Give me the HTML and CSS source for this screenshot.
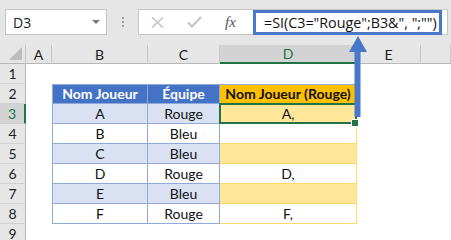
FILE: index.html
```html
<!DOCTYPE html>
<html lang="fr">
<head>
    <meta charset="UTF-8">
    <title>SI Rouge</title>
    <link rel="stylesheet" href="styles.css">
</head>
<body>
    <div class="toolbar">
        <div class="namebox">
            <span>D3</span>
            <svg class="caret" width="8" height="4" viewBox="0 0 8 4"><polygon points="0,0 8,0 4,4" fill="#7a7a7a"/></svg>
        </div>
        <div class="dots"><i></i><i></i><i></i></div>
        <div class="formula">
            <svg class="fbtn" width="13" height="11" viewBox="0 0 13 11"><path d="M1 0.5 L12 10.5 M12 0.5 L1 10.5" stroke="#c3c3c3" stroke-width="1.6" fill="none"/></svg>
            <svg class="fbtn" width="15" height="12" viewBox="0 0 15 12"><path d="M1 6.5 L5 10.5 L14 1" stroke="#c3c3c3" stroke-width="2" fill="none"/></svg>
            <span class="fx">fx</span>
            <div class="input">=SI(C3="Rouge";B3&amp;", ";"")</div>
        </div>
    </div>

    <div class="sheet">
        <div class="corner"><svg width="13" height="13" viewBox="0 0 13 13"><polygon points="13,0 13,13 0,13" fill="#bcbcbc"/></svg></div>
        <div class="colhead">A</div>
        <div class="colhead">B</div>
        <div class="colhead">C</div>
        <div class="colhead active">D</div>
        <div class="colhead">E</div>
        <div class="colhead"></div>

        <div class="rowhead">1</div>
        <div class="cell"></div><div class="cell"></div><div class="cell"></div><div class="cell"></div><div class="cell"></div><div class="cell"></div>

        <div class="rowhead">2</div>
        <div class="cell"></div>
        <div class="cell t blue-h first top">Nom Joueur</div>
        <div class="cell t blue-h top">Équipe</div>
        <div class="cell t gold-h top">Nom Joueur (Rouge)</div>
        <div class="cell"></div><div class="cell"></div>

        <div class="rowhead active">3</div>
        <div class="cell"></div>
        <div class="cell t blue first">A</div>
        <div class="cell t blue">Rouge</div>
        <div class="cell t gold selected">A,</div>
        <div class="cell"></div><div class="cell"></div>

        <div class="rowhead">4</div>
        <div class="cell"></div>
        <div class="cell t blue-w first">B</div>
        <div class="cell t blue-w">Bleu</div>
        <div class="cell t gold-w"></div>
        <div class="cell"></div><div class="cell"></div>

        <div class="rowhead">5</div>
        <div class="cell"></div>
        <div class="cell t blue first">C</div>
        <div class="cell t blue">Bleu</div>
        <div class="cell t gold"></div>
        <div class="cell"></div><div class="cell"></div>

        <div class="rowhead">6</div>
        <div class="cell"></div>
        <div class="cell t blue-w first">D</div>
        <div class="cell t blue-w">Rouge</div>
        <div class="cell t gold-w">D,</div>
        <div class="cell"></div><div class="cell"></div>

        <div class="rowhead">7</div>
        <div class="cell"></div>
        <div class="cell t blue first">E</div>
        <div class="cell t blue">Bleu</div>
        <div class="cell t gold"></div>
        <div class="cell"></div><div class="cell"></div>

        <div class="rowhead">8</div>
        <div class="cell"></div>
        <div class="cell t blue-w first">F</div>
        <div class="cell t blue-w">Rouge</div>
        <div class="cell t gold-w">F,</div>
        <div class="cell"></div><div class="cell"></div>

        <div class="rowhead">9</div>
        <div class="cell"></div><div class="cell"></div><div class="cell"></div><div class="cell"></div><div class="cell"></div><div class="cell"></div>
    </div>

    <svg class="arrow" width="20" height="82" viewBox="0 0 20 82">
        <polygon points="1,16 19,16 10,0" fill="#4a78c8"/>
        <rect x="6.5" y="15" width="6" height="66" fill="#4a78c8"/>
    </svg>
</body>
</html>
```

FILE: styles.css
```css
body {
    margin: 0;
    width: 451px;
    height: 240px;
    overflow: hidden;
    background: #fff;
    font-family: Lato, "Liberation Sans", sans-serif;
    position: relative;
}
.toolbar {
    height: 45px;
    background: #e6e6e6;
    display: flex;
    align-items: flex-start;
    padding-top: 9px;
    box-sizing: border-box;
}
.namebox {
    margin-left: 5px;
    width: 102px;
    height: 26px;
    box-sizing: border-box;
    background: #fff;
    border: 1px solid #c6c6c6;
    display: flex;
    align-items: center;
    justify-content: space-between;
    padding: 0 6px 0 7px;
    font-family: "Open Sans", sans-serif;
    font-size: 14px;
    color: #222;
}
.dots {
    width: 31px;
    height: 26px;
    display: flex;
    flex-direction: column;
    align-items: center;
    justify-content: center;
    gap: 2px;
}
.dots i {
    width: 2px;
    height: 2px;
    background: #a0a0a0;
}
.formula {
    width: 310px;
    height: 26px;
    box-sizing: border-box;
    background: #fff;
    border: 1px solid #c6c6c6;
    display: flex;
    align-items: center;
}
.fbtn {
    margin-left: 12px;
    margin-right: 11px;
}
.fx {
    margin-left: 12px;
    font-family: "Liberation Serif", serif;
    font-style: italic;
    font-size: 15px;
    color: #555;
    width: 14px;
}
.input {
    margin-left: 14px;
    width: 189px;
    height: 25px;
    box-sizing: border-box;
    border: 3px solid #4a78c8;
    padding-left: 8px;
    font-family: "Open Sans", sans-serif;
    font-size: 14.3px;
    line-height: 19px;
    color: #111;
    white-space: nowrap;
}
.sheet {
    display: grid;
    grid-template-columns: 26px 26px 96px 72px 137px 64px 1fr;
    grid-template-rows: 19px repeat(9, 20px);
    font-size: 14px;
}
.corner, .colhead {
    background: #e6e6e6;
    border-right: 1px solid #c8c8c8;
    border-bottom: 1px solid #b8b8b8;
    box-sizing: border-box;
    display: flex;
    align-items: center;
    justify-content: center;
    color: #222;
}
.corner {
    align-items: flex-end;
    justify-content: flex-end;
    padding: 0 3px 3px 0;
}
.colhead.active {
    background: #d3d3d3;
    color: #217346;
    border-bottom: 2px solid #217346;
}
.rowhead {
    background: #e6e6e6;
    border-right: 1px solid #b8b8b8;
    border-bottom: 1px solid #d0d0d0;
    box-sizing: border-box;
    display: flex;
    align-items: center;
    justify-content: center;
    color: #222;
}
.rowhead.active {
    background: #d3d3d3;
    color: #217346;
    border-right: 2px solid #217346;
}
.cell {
    box-sizing: border-box;
    line-height: 19px;
    text-align: center;
    color: #111;
    white-space: nowrap;
}
.t {
    border-right: 1px solid #8eaadb;
    border-bottom: 1px solid #8eaadb;
}
.t.first {
    border-left: 1px solid #8eaadb;
}
.t.top {
    border-top: 1px solid #8eaadb;
    line-height: 18px;
}
.blue-h {
    background: #4472c4;
    color: #fff;
    font-weight: bold;
}
.blue {
    background: #d9e1f2;
}
.blue-w {
    background: #fff;
}
.gold-h {
    background: #ffc000;
    font-weight: bold;
    border-color: #ffd966;
    border-right-color: #ffd966;
    border-bottom-color: #ffd966;
}
.gold, .gold-w {
    border-right-color: #ffd966;
    border-bottom-color: #ffd966;
}
.gold {
    background: #ffe699;
}
.gold-w {
    background: #fff;
}
.selected {
    position: relative;
}
.selected::after {
    content: "";
    position: absolute;
    top: -1px;
    left: -1px;
    right: -1px;
    bottom: -1px;
    border: 2px solid #217346;
}
.selected::before {
    content: "";
    position: absolute;
    width: 6px;
    height: 6px;
    right: -2px;
    bottom: -3px;
    background: #217346;
    z-index: 1;
    box-shadow: 0 0 0 1px #fff;
}
.arrow {
    position: absolute;
    left: 348px;
    top: 36px;
}
```
